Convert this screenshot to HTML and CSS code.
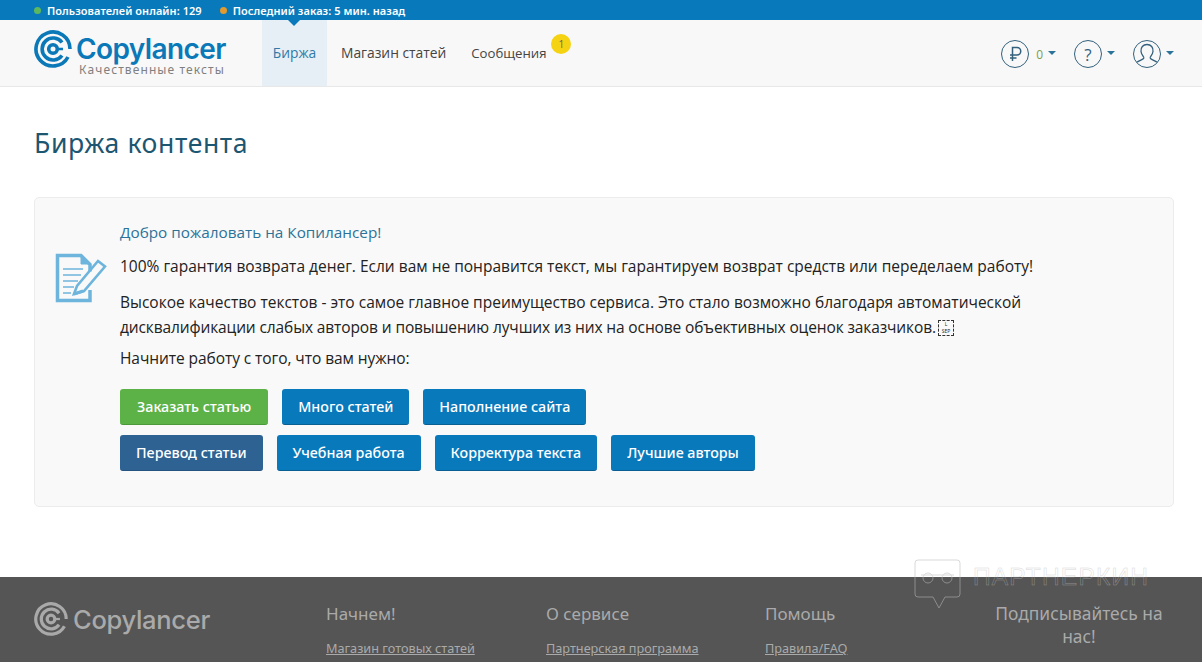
FILE: index.html
```html
<!DOCTYPE html>
<html lang="ru">
<head>
<meta charset="utf-8">
<title>Биржа контента</title>
<link rel="stylesheet" href="styles.css">
</head>
<body>
<div class="topbar">
  <span class="stat"><i class="dot green"></i>Пользователей онлайн: 129</span>
  <span class="stat"><i class="dot orange"></i>Последний заказ: 5 мин. назад</span>
</div>
<header class="header">
  <a class="logo">
    <svg class="logo-mark" viewBox="0 0 38 38" fill="none" stroke="#0b78b8" stroke-width="3.6"><path d="M34 27A17 17 0 1 1 36 19"/><path d="M28 25.500A11 11 0 1 1 28 12.500"/><circle cx="19" cy="19" r="4.300"/><path d="M23 19h6" stroke-width="2.500"/></svg>
    <span class="logo-text"><b>Copylancer</b><small>Качественные тексты</small></span>
  </a>
  <nav class="nav">
    <a class="nav-item active">Биржа</a>
    <a class="nav-item">Магазин статей</a>
    <a class="nav-item msg">Сообщения<span class="badge">1</span></a>
  </nav>
  <div class="tools">
    <span class="tool"><span class="circle"><svg viewBox="0 0 28 28" fill="none" stroke="#33607c" stroke-width="1.5"><path d="M11.500 21V7.500H16a3.600 3.600 0 0 1 0 7.500H9M9 18H15.500"/></svg></span><span class="zero">0</span><i class="caret"></i></span>
    <span class="tool"><span class="circle q">?</span><i class="caret"></i></span>
    <span class="tool"><span class="circle"><svg viewBox="0 0 28 28" fill="none" stroke="#33607c" stroke-width="1.3"><path d="M3.500 22.500c3-2.500 6.800-2.800 7.300-4.500.3-1.300-2.300-3-2.800-6.500C7.500 7.500 10 4.500 14 4.500s6.500 3 6 7c-.5 3.500-3.100 5.200-2.800 6.500.5 1.700 4.300 2 7.300 4.500"/></svg></span><i class="caret"></i></span>
  </div>
</header>
<main class="main">
  <h1 class="title">Биржа контента</h1>
  <section class="panel">
    <svg class="panel-icon" viewBox="0 0 52 50" fill="none" stroke="#6db5dc"><path d="M35 37v10.500H2.500V2.500H26l9 9v7" stroke-width="3.500"/><path d="M26 2v9h9z" fill="#6db5dc" stroke-width="1"/><path d="M8 16h20M8 22h18M8 28h15M8 34h11M8 40h8" stroke-width="1.500"/><path d="M19 41l3-8L43 8l7 5.500L29 38z" stroke-width="2.600"/><path d="M19 41l9-3" stroke-width="3"/></svg>
    <div class="panel-body">
      <p class="welcome">Добро пожаловать на Копилансер!</p>
      <p class="p1">100% гарантия возврата денег. Если вам не понравится текст, мы гарантируем возврат средств или переделаем работу!</p>
      <p class="p2">Высокое качество текстов - это самое главное преимущество сервиса. Это стало возможно благодаря автоматической <span class="tight">дисквалификации слабых авторов и повышению лучших из них на основе объективных оценок заказчиков.</span><span class="lsep">L<br>SEP</span></p>
      <p class="p3">Начните работу с того, что вам нужно:</p>
      <div class="btn-row">
        <a class="btn green-btn">Заказать статью</a>
        <a class="btn">Много статей</a>
        <a class="btn">Наполнение сайта</a>
      </div>
      <div class="btn-row">
        <a class="btn navy-btn">Перевод статьи</a>
        <a class="btn">Учебная работа</a>
        <a class="btn">Корректура текста</a>
        <a class="btn">Лучшие авторы</a>
      </div>
    </div>
  </section>
</main>
<footer class="footer">
  <div class="f-logo">
    <svg class="f-mark" viewBox="0 0 38 38" fill="none" stroke="#a9a9a9" stroke-width="3.600"><path d="M34 27A17 17 0 1 1 36 19"/><path d="M28 25.500A11 11 0 1 1 28 12.500"/><circle cx="19" cy="19" r="4.300"/><path d="M23 19h6" stroke-width="2.500"/></svg>
    <b>Copylancer</b>
  </div>
  <div class="f-col c1"><h4>Начнем!</h4><a>Магазин готовых статей</a></div>
  <div class="f-col c2"><h4>О сервисе</h4><a>Партнерская программа</a></div>
  <div class="f-col c3"><h4>Помощь</h4><a>Правила/FAQ</a></div>
  <div class="f-sub">Подписывайтесь на нас!</div>
</footer>
<div class="watermark">
  <svg class="wm-icon" viewBox="0 0 47 50" fill="none" stroke="#bbb" stroke-width="1"><path d="M4 1h39a3 3 0 0 1 3 3v31a3 3 0 0 1-3 3H31l-6 11-6-11H4a3 3 0 0 1-3-3V4a3 3 0 0 1 3-3z"/><circle cx="14" cy="19" r="5"/><circle cx="33" cy="19" r="5"/><path d="M7 16h33"/></svg>
  <span class="wm-text">ПАРТНЕРКИН</span>
</div>
</body>
</html>
```
FILE: styles.css
```css
* { box-sizing: border-box; }
html, body { margin: 0; padding: 0; height: 662px; overflow: hidden; }
body { background: #fff; font-family: "Open Sans", "Noto Sans", sans-serif; color: #222; position: relative; }
p { margin: 0; }

.topbar { height: 20px; background: #0879bb; display: flex; align-items: center; gap: 18px; padding-left: 34px; color: #fff; font-size: 11px; font-weight: 600; letter-spacing: .05px; font-family: "Noto Sans", sans-serif; }
.stat { display: flex; align-items: center; }
.dot { width: 7px; height: 7px; border-radius: 50%; margin-right: 6px; }
.green { background: #5cb85c; }
.orange { background: #e09a2e; }

.header { height: 67px; background: #f8f8f8; border-bottom: 1px solid #e8e8e8; display: flex; padding-left: 34px; padding-right: 28px; }
.logo { display: flex; width: 228px; padding-top: 10px; align-items: flex-start; }
.logo-mark { width: 38px; height: 38px; flex: none; }
.logo-text { display: flex; flex-direction: column; margin-left: 4px; }
.logo-text b { font-family: "Inter", sans-serif; font-size: 28px; line-height: 26px; font-weight: 600; letter-spacing: -.6px; color: #0b78b8; margin-top: 6px; }
.logo-text small { font-size: 12px; line-height: 14px; margin-top: 1px; margin-left: 3px; letter-spacing: 1.100px; color: #808080; font-family: "Noto Sans", sans-serif; }

.nav { display: flex; font-size: 13.800px; color: #444; }
.nav-item { padding: 0 11px 0 14px; line-height: 66px; position: relative; }
.nav-item.active { background: #e6eff5; color: #2f7ba8; padding: 0; width: 65px; text-align: center; }
.nav-item.active::before { content: ""; position: absolute; left: 26px; top: 0; border: 6px solid transparent; border-top-color: #0879bb; border-bottom: 0; }
.msg { font-size: 13.200px; }
.badge { position: absolute; left: 94px; top: 14px; width: 20px; height: 20px; border-radius: 50%; background: #f5d312; color: #666; font-size: 10px; line-height: 20px; text-align: center; }

.tools { margin-left: auto; display: flex; align-items: flex-start; padding-top: 20px; gap: 18px; }
.tool { display: flex; align-items: center; height: 28px; }
.circle { width: 28px; height: 28px; border: 1.500px solid #33607c; border-radius: 50%; display: flex; align-items: center; justify-content: center; color: #33607c; font-size: 17px; overflow: hidden; }
.circle svg { width: 28px; height: 28px; flex: none; }
.zero { color: #7f9e4a; font-size: 12px; margin-left: 7px; }
.caret { width: 0; height: 0; border: 4px solid transparent; border-top-color: #2b7399; border-bottom: 0; margin-left: 5px; margin-bottom: 3px; }

.main { padding: 0 28px 0 34px; }
.title { margin: 0; padding-top: 39px; font-family: "Noto Sans", sans-serif; font-size: 26.600px; line-height: 35px; font-weight: 400; color: #1d5671; letter-spacing: .6px; }

.panel { margin-top: 36px; height: 310px; background: #f9f9f9; border: 1px solid #ececec; border-radius: 5px; display: flex; padding: 24px 20px 0 20px; }
.panel-icon { width: 52px; height: 50px; margin-top: 31px; flex: none; }
.panel-body { margin-left: 13px; font-size: 15.500px; }
.welcome { color: #2b7399; line-height: 20px; font-size: 15.300px; }
.p1 { margin-top: 14px; line-height: 20px; }
.p2 { margin-top: 14px; line-height: 25px; }
.tight { letter-spacing: -.12px; }
.p3 { margin-top: 8px; line-height: 20px; letter-spacing: -.07px; }
.lsep { display: inline-block; border: 1px dashed #333; font-size: 5px; line-height: 7px; width: 16px; height: 16px; text-align: center; vertical-align: top; margin: 5px 0 0 2px; }
.btn-row { display: flex; gap: 14px; margin-top: 10px; }
.p3 + .btn-row { margin-top: 21px; }
.btn { display: block; height: 36px; line-height: 35px; padding: 0 16px; background: #0879bb; border-bottom: 1px solid #0a5f92; border-radius: 3px; color: #fff; font-family: "Noto Sans", sans-serif; font-size: 14.300px; font-weight: 500; white-space: nowrap; }
.green-btn { background: #5cb247; border-bottom-color: #4b9a3a; padding: 0 17px; }
.navy-btn { background: #2d6293; border-bottom-color: #255380; }

.footer { position: absolute; left: 0; right: 0; top: 577px; height: 85px; background: #555; color: #aaa; overflow: hidden; font-family: "Noto Sans", sans-serif; }
.f-logo { position: absolute; left: 34px; top: 25px; display: flex; align-items: center; }
.f-mark { width: 34px; height: 34px; }
.f-logo b { font-family: "Inter", sans-serif; font-weight: 500; font-size: 25.500px; letter-spacing: -.3px; margin-left: 5px; color: #aaa; }
.f-col { position: absolute; top: 26px; }
.c1 { left: 326px; } .c2 { left: 546px; } .c3 { left: 765px; }
.f-col h4 { margin: 0 0 15px; font-size: 17px; line-height: 22px; font-weight: 400; }
.f-col a { display: block; font-size: 12.700px; line-height: 16px; text-decoration: underline; }
.f-sub { position: absolute; left: 985px; top: 25px; width: 188px; font-size: 17.400px; line-height: 23px; text-align: center; }

.watermark { position: absolute; left: 914px; top: 559px; display: flex; pointer-events: none; opacity: .55; }
.wm-icon { width: 47px; height: 50px; }
.wm-text { font-size: 24.500px; line-height: 1; margin: 6px 0 0 12px; letter-spacing: 1.200px; color: transparent; -webkit-text-stroke: .5px #bbb; font-family: "Liberation Sans", sans-serif; }
```
